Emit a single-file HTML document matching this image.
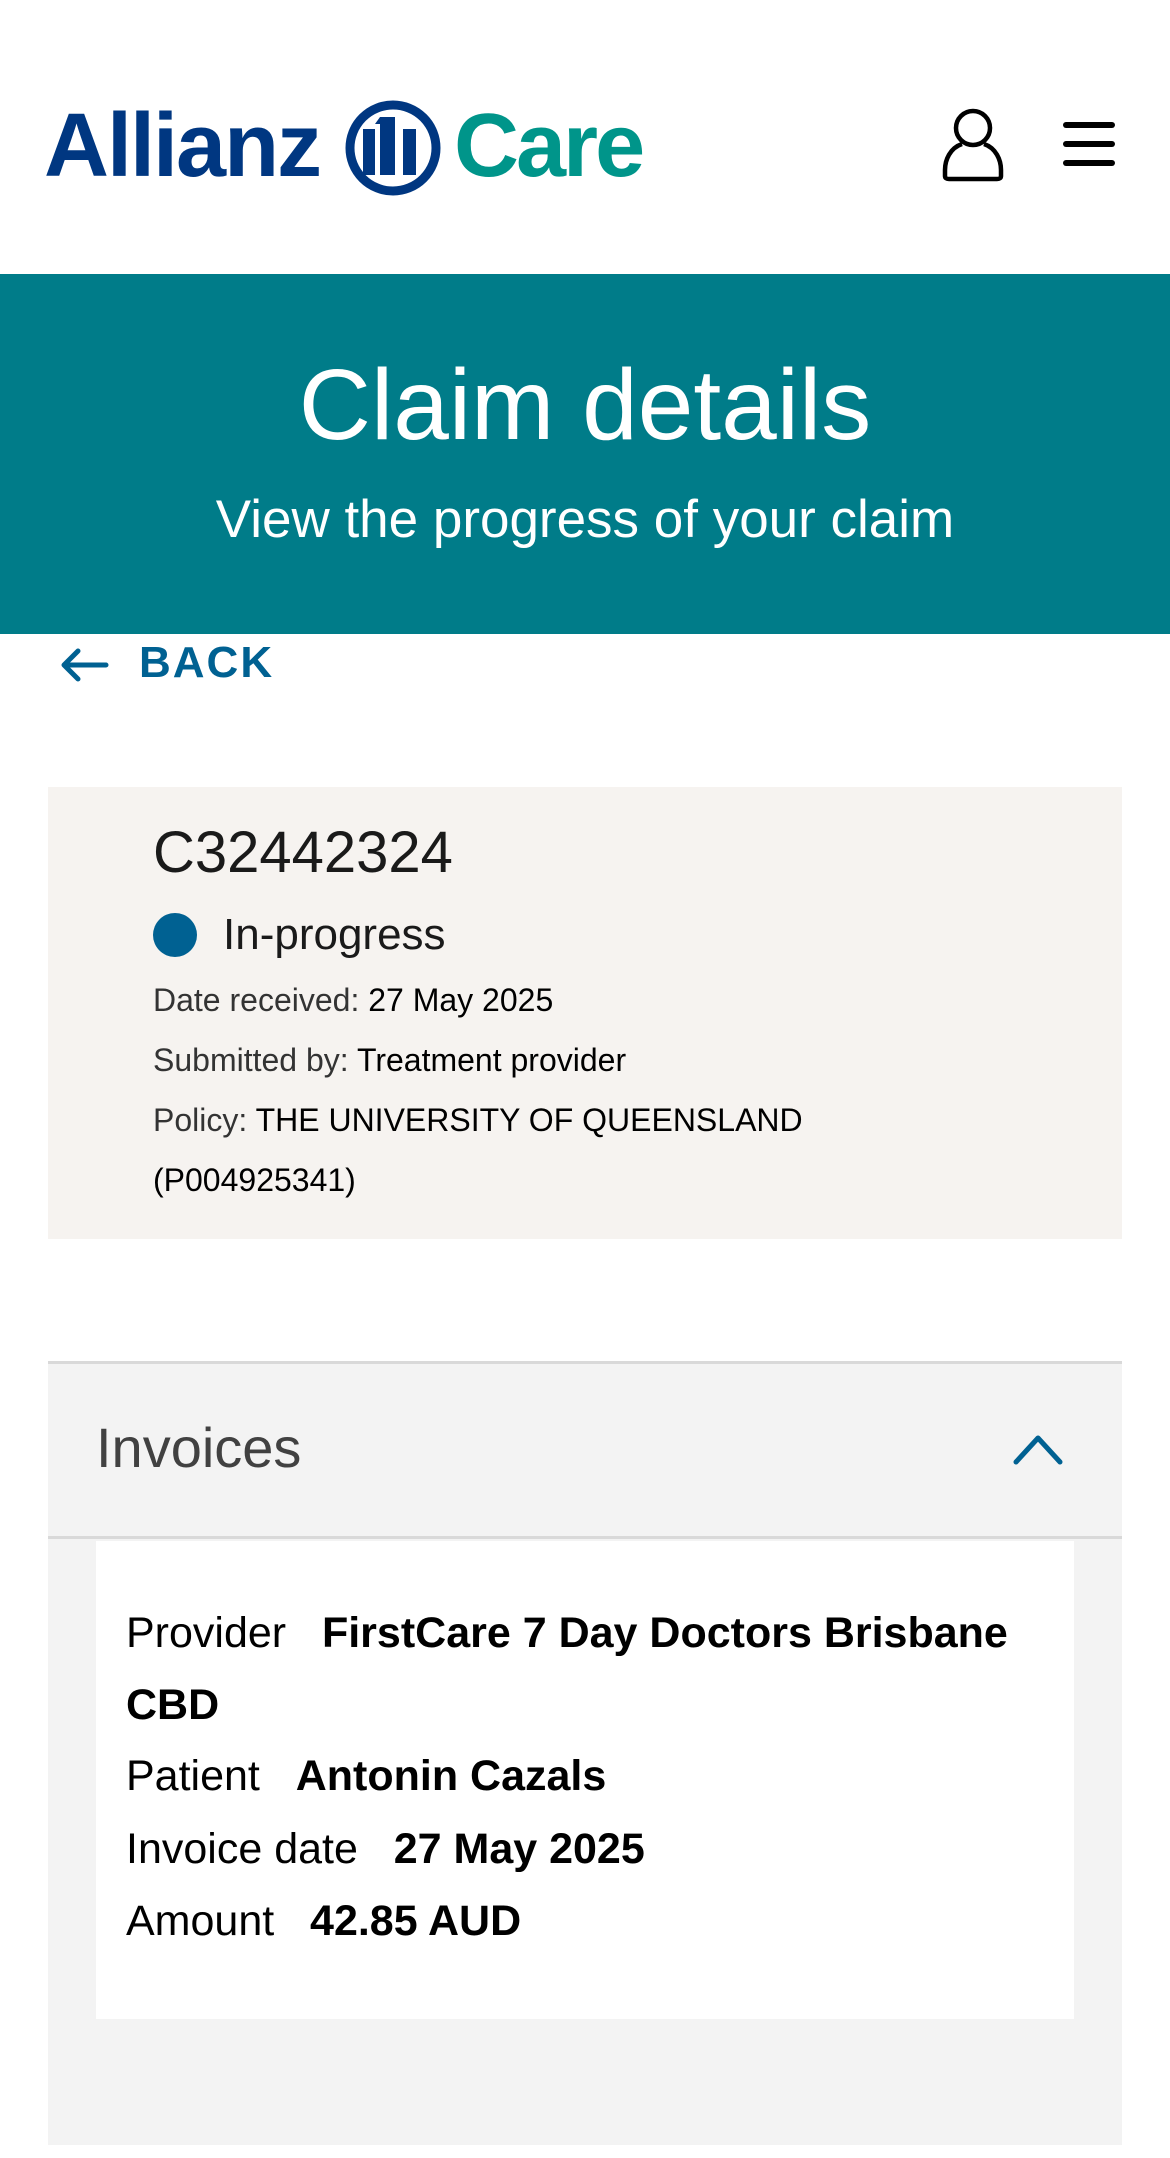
<!DOCTYPE html>
<html><head><meta charset="utf-8"><style>
*{margin:0;padding:0;box-sizing:border-box}
body{width:1170px;height:2158px;background:#fff;font-family:"Liberation Sans",sans-serif;position:relative;overflow:hidden}
.abs{position:absolute;white-space:nowrap}
</style></head><body>
<div class="abs" style="left:44px;top:86px;font-size:90px;font-weight:bold;color:#003781;letter-spacing:-2px;line-height:120px">Allianz</div>
<svg class="abs" style="left:340px;top:96px" width="106" height="106" viewBox="340 96 106 106">
<circle cx="393" cy="148" r="43" fill="none" stroke="#003781" stroke-width="9"/>
<rect x="363" y="129" width="12" height="46" fill="#003781"/>
<path d="M380 117 H395 V175 H380 V124 H375 Z" fill="#003781"/>
<rect x="403" y="129" width="13" height="46" fill="#003781"/>
</svg>
<div class="abs" style="left:454px;top:86px;font-size:90px;font-weight:bold;color:#00958a;letter-spacing:-3px;line-height:120px">Care</div>
<svg class="abs" style="left:940px;top:104px" width="70" height="80" viewBox="0 0 70 80">
<circle cx="33" cy="24" r="17" fill="none" stroke="#000" stroke-width="4.5"/>
<path d="M22 40 C10 44 5 56 5 66 V72 Q5 75 9 75 H57 Q61 75 61 72 V66 C61 56 56 44 44 40" fill="none" stroke="#000" stroke-width="4.5"/>
</svg>
<div class="abs" style="left:1063px;top:122px;width:52px;height:6px;background:#000;border-radius:3px"></div>
<div class="abs" style="left:1063px;top:141px;width:52px;height:6px;background:#000;border-radius:3px"></div>
<div class="abs" style="left:1063px;top:160px;width:52px;height:6px;background:#000;border-radius:3px"></div>

<div class="abs" style="left:0;top:274px;width:1170px;height:360px;background:#007c89"></div>
<div class="abs" style="left:0;top:345px;width:1170px;text-align:center;color:#fff;font-size:100px;font-weight:300;line-height:120px">Claim details</div>
<div class="abs" style="left:0;top:488px;width:1170px;text-align:center;color:#fff;font-size:53px;line-height:64px">View the progress of your claim</div>

<svg class="abs" style="left:58px;top:645px" width="52" height="40" viewBox="0 0 52 40"><path d="M48 20 H6 M20 6 L6 20 L20 34" fill="none" stroke="#006192" stroke-width="5" stroke-linecap="round" stroke-linejoin="round"/></svg>
<div class="abs" style="left:139px;top:636px;font-size:44px;font-weight:bold;color:#006192;letter-spacing:2px;line-height:54px">BACK</div>

<div class="abs" style="left:48px;top:787px;width:1074px;height:452px;background:#f6f3f0"></div>
<div class="abs" style="left:153px;top:820px;font-size:58px;color:#1a1a1a;line-height:66px">C32442324</div>
<div class="abs" style="left:153px;top:913px;width:44px;height:44px;border-radius:50%;background:#006192"></div>
<div class="abs" style="left:223px;top:908px;font-size:44px;color:#1a1a1a;line-height:54px">In-progress</div>
<div class="abs" style="left:153px;top:980px;font-size:32px;color:#333;line-height:40px">Date received: <span style="color:#000">27 May 2025</span></div>
<div class="abs" style="left:153px;top:1040px;font-size:32px;color:#333;line-height:40px">Submitted by: <span style="color:#000">Treatment provider</span></div>
<div class="abs" style="left:153px;top:1100px;font-size:32px;color:#333;line-height:40px">Policy: <span style="color:#000">THE UNIVERSITY OF QUEENSLAND</span></div>
<div class="abs" style="left:153px;top:1160px;font-size:32px;color:#000;line-height:40px">(P004925341)</div>

<div class="abs" style="left:48px;top:1361px;width:1074px;height:784px;background:#f3f3f3;border-top:3px solid #d9d9d9"></div>
<div class="abs" style="left:96px;top:1416px;font-size:56px;color:#414141;line-height:64px">Invoices</div>
<svg class="abs" style="left:1010px;top:1428px" width="56" height="40" viewBox="0 0 56 40"><path d="M6 34 L28 10 L50 34" fill="none" stroke="#006192" stroke-width="5" stroke-linecap="round" stroke-linejoin="round"/></svg>
<div class="abs" style="left:48px;top:1536px;width:1074px;height:3px;background:#d9d9d9"></div>
<div class="abs" style="left:96px;top:1541px;width:978px;height:478px;background:#fff"></div>
<div class="abs" style="left:126px;top:1608px;font-size:43px;color:#000;line-height:50px">Provider&nbsp;&nbsp; <b>FirstCare 7 Day Doctors Brisbane</b></div>
<div class="abs" style="left:126px;top:1680px;font-size:43px;color:#000;line-height:50px"><b>CBD</b></div>
<div class="abs" style="left:126px;top:1751px;font-size:43px;color:#000;line-height:50px">Patient&nbsp;&nbsp; <b>Antonin Cazals</b></div>
<div class="abs" style="left:126px;top:1824px;font-size:43px;color:#000;line-height:50px">Invoice date&nbsp;&nbsp; <b>27 May 2025</b></div>
<div class="abs" style="left:126px;top:1896px;font-size:43px;color:#000;line-height:50px">Amount&nbsp;&nbsp; <b>42.85 AUD</b></div>
</body></html>
